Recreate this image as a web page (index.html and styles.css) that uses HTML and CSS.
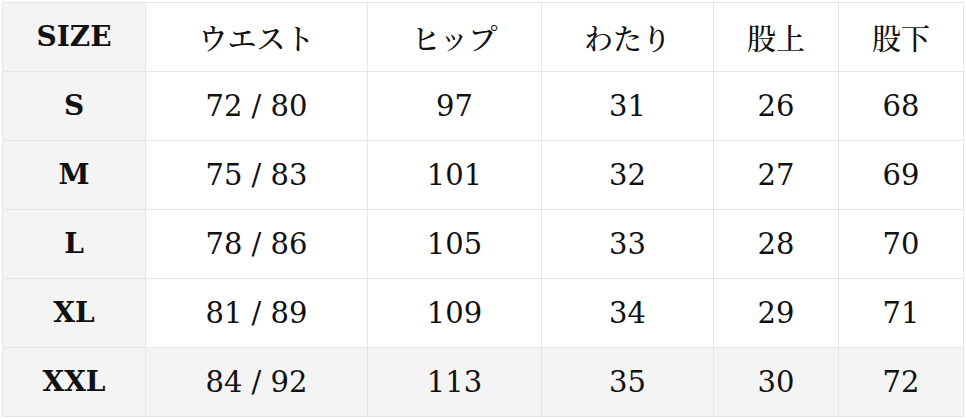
FILE: index.html
```html
<!DOCTYPE html>
<html lang="ja">
<head>
<meta charset="utf-8">
<title>Size chart</title>
<link rel="stylesheet" href="styles.css">
</head>
<body>
<div class="wrap">
<table class="size-table">
<colgroup>
<col class="c-size"><col class="c-waist"><col class="c-hip"><col class="c-thigh"><col class="c-rise"><col class="c-inseam">
</colgroup>
<thead>
<tr>
<th class="label">SIZE</th><th>ウエスト</th><th>ヒップ</th><th>わたり</th><th>股上</th><th>股下</th>
</tr>
</thead>
<tbody>
<tr><th class="label">S</th><td>72 / 80</td><td>97</td><td>31</td><td>26</td><td>68</td></tr>
<tr><th class="label">M</th><td>75 / 83</td><td>101</td><td>32</td><td>27</td><td>69</td></tr>
<tr><th class="label">L</th><td>78 / 86</td><td>105</td><td>33</td><td>28</td><td>70</td></tr>
<tr><th class="label">XL</th><td>81 / 89</td><td>109</td><td>34</td><td>29</td><td>71</td></tr>
<tr class="shade"><th class="label">XXL</th><td>84 / 92</td><td>113</td><td>35</td><td>30</td><td>72</td></tr>
</tbody>
</table>
</div>
</body>
</html>
```

FILE: styles.css
```css
html, body {
  margin: 0;
  padding: 0;
  background: #ffffff;
}
.wrap {
  padding: 2px;
}
.size-table {
  border-collapse: separate;
  border-spacing: 0;
  table-layout: fixed;
  width: 962px;
  border-top: 1px solid #e6e6e6;
  border-left: 1px solid #e6e6e6;
  font-family: "DejaVu Serif", "Noto Serif CJK JP", "Noto Sans CJK JP", serif;
  font-size: 29px;
  color: #111111;
}
.c-size { width: 143px; }
.c-waist { width: 222px; }
.c-hip { width: 174px; }
.c-thigh { width: 172px; }
.c-rise { width: 125px; }
.c-inseam { width: 125px; }
.size-table th,
.size-table td {
  height: 68px;
  padding: 0;
  text-align: center;
  vertical-align: middle;
  border-right: 1px solid #e6e6e6;
  border-bottom: 1px solid #e6e6e6;
  font-weight: normal;
  line-height: 1;
}
.size-table thead th {
  font-family: "Noto Serif CJK JP", "Noto Sans CJK JP", "DejaVu Serif", serif;
  font-weight: 500;
}
.size-table th.label {
  font-family: "DejaVu Serif", serif;
  font-weight: bold;
  background: #f4f4f4;
  font-size: 28px;
}
.size-table tr.shade td {
  background: #f4f4f4;
}
```
